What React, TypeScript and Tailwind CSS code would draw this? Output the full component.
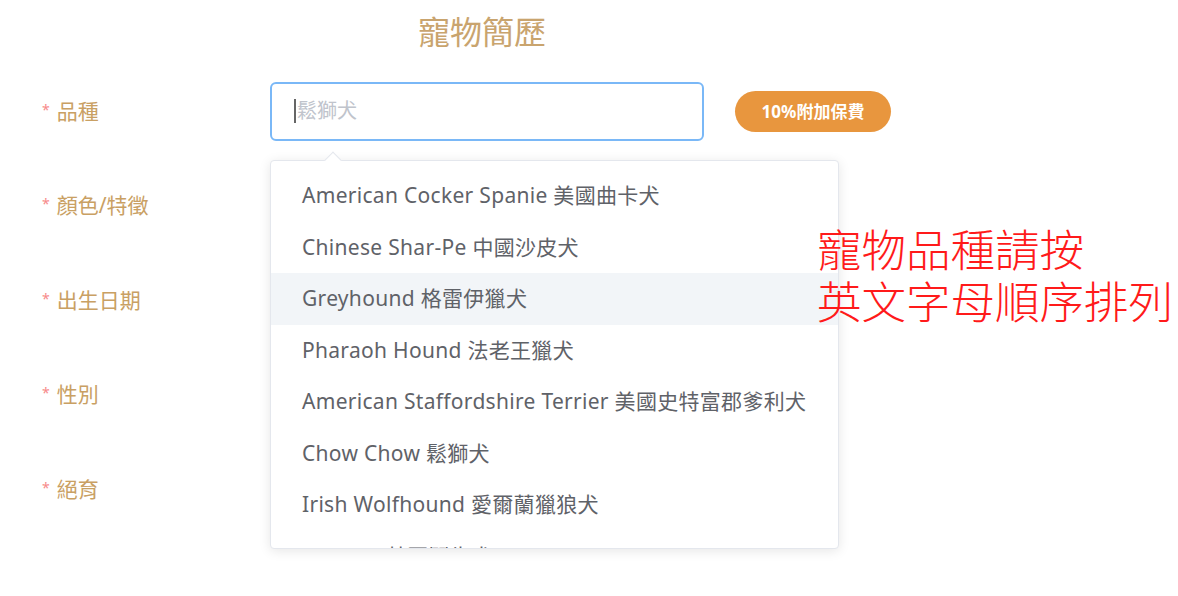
import React from "react";

const labels = ["品種", "顏色/特徵", "出生日期", "性別", "絕育"];
const items = [
  "American Cocker Spanie 美國曲卡犬",
  "Chinese Shar-Pe 中國沙皮犬",
  "Greyhound 格雷伊獵犬",
  "Pharaoh Hound 法老王獵犬",
  "American Staffordshire Terrier 美國史特富郡爹利犬",
  "Chow Chow 鬆獅犬",
  "Irish Wolfhound 愛爾蘭獵狼犬",
  "Bulldog 英國鬥牛犬",
];

export default function App() {
  return (
    <div className="relative w-[1178px] h-[596px] overflow-hidden bg-white font-['Noto_Sans','Noto_Sans_CJK_TC',sans-serif]">
      <div className="pl-[418px] pt-[12px] h-[64px] text-[32px] leading-[40px] text-[#c9a46e]">寵物簡歷</div>
      {labels.map((l, i) => (
        <div key={l} className="flex items-center h-[94.5px]">
          <div className="w-[270px] pl-[42px] flex items-center text-[21px] text-[#c9a063]">
            <span className="text-[14px] text-[#f78989] mr-[7px] -mt-[4px]">*</span>
            <span>{l}</span>
          </div>
          {i === 0 && (
            <>
              <div className="w-[434px] h-[59px] border-2 border-[#7ab8f7] rounded-[6px] flex items-center pl-[22px]">
                <span className="w-[2px] h-[24px] bg-[#666] mr-[1px]" />
                <span className="text-[20px] text-[#c0c4cc]">鬆獅犬</span>
              </div>
              <div className="ml-[31px] w-[156px] h-[41px] rounded-full bg-[#e8963e] text-white text-[17px] font-bold flex items-center justify-center">
                10%附加保費
              </div>
            </>
          )}
        </div>
      ))}

      <div className="absolute left-[270px] top-[160px] w-[569px] h-[389px] bg-white border border-[#e4e7ed] rounded-[4px] shadow-[0_2px_12px_rgba(0,0,0,0.1)] overflow-hidden">
        <div className="pt-[9px]">
          {items.map((t, i) => (
            <div
              key={t}
              className={`h-[51.5px] flex items-center pl-[31px] text-[21px] tracking-[0.3px] text-[#5f6268] whitespace-nowrap ${i === 2 ? "bg-[#f2f5f8]" : ""}`}
            >
              {t}
            </div>
          ))}
        </div>
      </div>
      <div className="absolute left-[327px] top-[154px] w-[12px] h-[12px] bg-white border-l border-t border-[#e4e7ed] rotate-45" />

      <div className="absolute left-[817px] top-[222px] text-[44.5px] leading-[52px] text-[#ff1a1a] font-light font-['Noto_Sans_CJK_TC',sans-serif] whitespace-nowrap">
        <div>寵物品種請按</div>
        <div>英文字母順序排列</div>
      </div>
    </div>
  );
}
